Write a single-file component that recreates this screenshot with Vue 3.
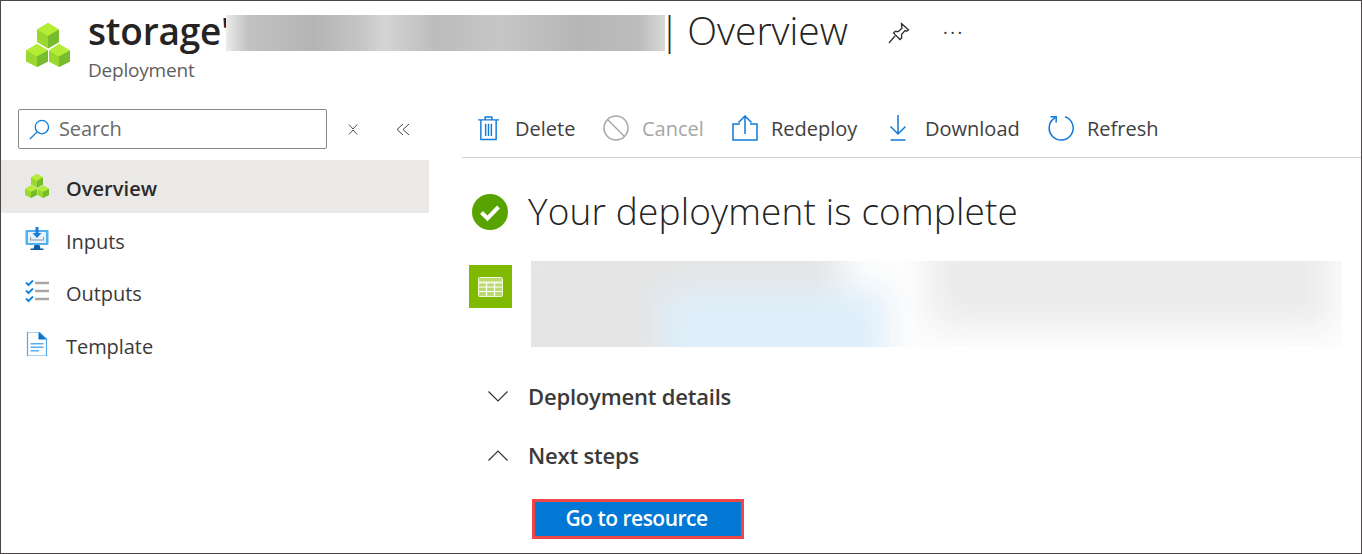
<script setup>
const navItems = [
  { label: 'Overview', icon: 'cubes', active: true },
  { label: 'Inputs', icon: 'inputs' },
  { label: 'Outputs', icon: 'outputs' },
  { label: 'Template', icon: 'template' },
];
</script>

<template>
  <div class="frame">
    <header class="page-header">
      <svg class="logo" viewBox="0 0 44 44">
        <path d="M22 0l11 6.500v12.500L22 25.500 11 19V6.500z" fill="#9ad82f" />
        <path d="M22 0l11 6.500L22 13 11 6.500z" fill="#b4ec36" />
        <path d="M22 13l11-6.500V19l-11 6.500z" fill="#76bc2d" />
        <path d="M11 21l11 6.500v11L11 44 0 38.500v-11z" fill="#9ad82f" />
        <path d="M11 21l11 6.500L11 33.500 0 27.500z" fill="#b4ec36" />
        <path d="M11 33.500l11-6v11L11 44z" fill="#76bc2d" />
        <path d="M33 21l11 6.500v11L33 44l-10-5.500v-11z" fill="#9ad82f" />
        <path d="M33 21l11 6.500-11 6-10-6z" fill="#b4ec36" />
        <path d="M33 33.500l11-6v11L33 44z" fill="#76bc2d" />
      </svg>
      <div class="heading">
        <div class="title-row">
          <span class="title-name">storage'</span>
          <span class="title-blur"><i></i></span>
          <span class="title-page">| Overview</span>
          <svg class="pin" viewBox="0 0 24 24" fill="none" stroke="#333" stroke-width="1.300">
            <path d="M14.500 2.500l7 6.500-2 1.200-1.500-.6-3.500 4 .2 3.400-1.700 1.500-6.500-6.500 1.500-1.700 3.400.2 3.700-3.500-.5-1.700z" />
            <path d="M8 15l-6 7" />
          </svg>
          <span class="more">···</span>
        </div>
        <div class="subtitle">Deployment</div>
      </div>
    </header>

    <div class="content">
      <aside class="sidebar">
        <div class="search-row">
          <div class="search">
            <svg viewBox="0 0 22 22" fill="none" stroke="#0f7fdc" stroke-width="1.400">
              <circle cx="13.500" cy="8.500" r="7" />
              <path d="M8.500 13.500L1 21" />
            </svg>
            <span>Search</span>
          </div>
          <svg class="collapse-icon" viewBox="0 0 12 12" fill="none" stroke="#444" stroke-width="1">
            <path d="M1 .5l4.500 5 4.500-5M1 11.500l4.500-5 4.500 5" />
          </svg>
          <svg class="collapse-icon second" viewBox="0 0 14 12" fill="none" stroke="#444" stroke-width="1">
            <path d="M7 .5L1 6l6 5.500M13 .5L7 6l6 5.500" />
          </svg>
        </div>
        <nav class="nav">
          <div v-for="item in navItems" :key="item.label" class="nav-item" :class="{ active: item.active }">
            <svg v-if="item.icon === 'cubes'" class="nav-icon" viewBox="0 0 24 24">
              <path d="M12 0l6 3.500v7L12 14l-6-3.500v-7z" fill="#9ad82f" />
              <path d="M12 0l6 3.500L12 7 6 3.500z" fill="#b4ec36" />
              <path d="M12 7l6-3.500v7L12 14z" fill="#76bc2d" />
              <path d="M6 11.500l6 3.500v6l-6 3-6-3v-6z" fill="#9ad82f" />
              <path d="M6 11.500l6 3.500-6 3-6-3z" fill="#b4ec36" />
              <path d="M6 18l6-3v6l-6 3z" fill="#76bc2d" />
              <path d="M18 11.500l6 3.500v6l-6 3-5.500-3v-6z" fill="#9ad82f" />
              <path d="M18 11.500l6 3.500-6 3-5.500-3z" fill="#b4ec36" />
              <path d="M18 18l6-3v6l-6 3z" fill="#76bc2d" />
            </svg>
            <svg v-else-if="item.icon === 'inputs'" class="nav-icon" viewBox="0 0 24 24">
              <rect x="0.500" y="3" width="23" height="15" rx="1" fill="#50b0f0" />
              <rect x="3" y="5" width="18" height="11" fill="#e4f3fc" />
              <path d="M9.500 18h5l1 3.500h3V23h-13v-1.500h3z" fill="#0f5fa8" />
              <path d="M10.500 0h3v6h3L12 11 7.500 6h3z" fill="#1a7fd4" />
              <path d="M5 10v3.500h14V10h-1v2.500H6V10z" fill="#8a9aa6" />
            </svg>
            <svg v-else-if="item.icon === 'outputs'" class="nav-icon" viewBox="0 0 24 24" fill="none">
              <path d="M1 3.500l2.500 2.500L8 1.500M1 11.500l2.500 2.500L8 9.500M1 19.500l2.500 2.500L8 17.500" stroke="#1a86e0" stroke-width="2" />
              <path d="M10 4h14M10 12h14M10 20h14" stroke="#a6a6a6" stroke-width="2.600" />
            </svg>
            <svg v-else class="nav-icon" viewBox="0 0 24 24">
              <path d="M2.500 0H14l7.500 7v17h-19z" fill="#fff" stroke="#50a8ee" stroke-width="1.200" />
              <path d="M13.500 0l8 7.500h-8z" fill="#0f72c8" />
              <path d="M5.500 11h13v1.500h-13zM5.500 14.500h13V16h-13zM5.500 18h8.500v1.500H5.500z" fill="#5aaef0" />
            </svg>
            <span>{{ item.label }}</span>
          </div>
        </nav>
      </aside>

      <main class="main">
        <div class="toolbar">
          <div class="tool tool-delete">
            <svg viewBox="0 0 22 26" fill="none" stroke="#0f7ad8" stroke-width="1.500">
              <path d="M0 4.500h22M7.500 4.500V1.500h7v3M3 4.500V25h16V4.500M8 8.500v13M11 8.500v13M14 8.500v13" />
            </svg>
            <span>Delete</span>
          </div>
          <div class="tool tool-cancel disabled">
            <svg viewBox="0 0 26 26" fill="none" stroke="#a6a6a6" stroke-width="1.500">
              <circle cx="13" cy="13" r="12" />
              <path d="M4.500 4.500l17 17" />
            </svg>
            <span>Cancel</span>
          </div>
          <div class="tool tool-redeploy">
            <svg viewBox="0 0 26 26" fill="none" stroke="#0f7ad8" stroke-width="1.500">
              <path d="M8 9H1v16h24V9h-7M13 19V1.500M6.500 7.500L13 1l6.500 6.500" />
            </svg>
            <span>Redeploy</span>
          </div>
          <div class="tool tool-download">
            <svg viewBox="0 0 18 26" fill="none" stroke="#0f7ad8" stroke-width="1.500">
              <path d="M9 0v18.500M1.500 11.500L9 19l7.500-7.500M1.500 25h15" />
            </svg>
            <span>Download</span>
          </div>
          <div class="tool tool-refresh">
            <svg viewBox="0 0 26 26" fill="none" stroke="#0f7ad8" stroke-width="1.500">
              <path d="M7.500 2.500A12 12 0 1 0 17 1.700" />
              <path d="M2.500 1.800h5.700v5.700" />
            </svg>
            <span>Refresh</span>
          </div>
        </div>

        <div class="status">
          <svg viewBox="0 0 36 36">
            <circle cx="18" cy="18" r="18" fill="#57a300" />
            <path d="M9.500 18.500l6 6L26.500 13" fill="none" stroke="#fff" stroke-width="4" />
          </svg>
          <h1>Your deployment is complete</h1>
        </div>

        <div class="resource">
          <div class="resource-icon">
            <svg viewBox="0 0 25 20">
              <rect x="0.500" y="0.500" width="24" height="19" rx="1" fill="#bbdb6e" stroke="#f2f8dc" />
              <path d="M1 5.500h23" stroke="#f2f8dc" stroke-width="2" />
              <path d="M1 10h23M1 14.500h23M8.500 5.500V19M16.500 5.500V19" stroke="#fff" stroke-width="1.200" />
            </svg>
          </div>
          <div class="resource-blur"><i></i><b></b><em></em></div>
        </div>

        <div class="section">
          <svg viewBox="0 0 20 11" fill="none" stroke="#333" stroke-width="1.200"><path d="M.5.500L10 10 19.500.5" /></svg>
          <span>Deployment details</span>
        </div>
        <div class="section next">
          <svg viewBox="0 0 20 11" fill="none" stroke="#333" stroke-width="1.200"><path d="M.5 10.500L10 1l9.500 9.500" /></svg>
          <span>Next steps</span>
        </div>
        <button class="go-button"><span>Go to resource</span></button>
      </main>
    </div>
  </div>
</template>

<style>
html, body {
  margin: 0;
  background: #fff;
}
</style>

<style scoped>
.frame {
  width: 1362px;
  height: 554px;
  box-sizing: border-box;
  border: 1px solid #4b4648;
  overflow: hidden;
  background: #fff;
  color: #323130;
  font-family: "Open Sans", "Noto Sans", sans-serif;
}

.page-header {
  display: flex;
  height: 99px;
  padding: 22px 0 0 25px;
  box-sizing: border-box;
}

.logo {
  width: 44px;
  height: 44px;
  flex: none;
}

.heading {
  margin-left: 18px;
  margin-top: -13px;
}

.title-row {
  display: flex;
  align-items: center;
  height: 46px;
  font-size: 37px;
  color: #252423;
}

.title-name {
  width: 138px;
  flex: none;
  font-weight: 600;
  letter-spacing: -0.2px;
  white-space: nowrap;
  padding-bottom: 6px;
}

.title-blur {
  width: 439px;
  height: 36px;
  flex: none;
  overflow: hidden;
  position: relative;
  background: #c4c4c4;
}

.title-blur i {
  position: absolute;
  inset: 0;
  background: linear-gradient(90deg, #ebebeb 0, #c2c2c2 5%, #b4b4b4 20%, #c4c4c4 30%, #d4d4d4 36%, #bcbcbc 48%, #c6c6c6 62%, #b6b6b6 80%, #bcbcbc 94%, #d8d8d8 100%);
}

.title-page {
  width: 202px;
  margin-left: -6px;
  flex: none;
  font-size: 39px;
  font-weight: 300;
  word-spacing: -3px;
  box-sizing: border-box;
  white-space: nowrap;
  padding-bottom: 7px;
}

.pin {
  width: 24px;
  height: 24px;
  margin-left: 26px;
  flex: none;
}

.more {
  margin-left: 32px;
  font-size: 18px;
  letter-spacing: 2.500px;
  color: #333;
  padding-bottom: 2px;
}

.subtitle {
  font-size: 19px;
  color: #605e5c;
  margin-top: 1px;
  letter-spacing: -0.2px;
}

.content {
  display: grid;
  grid-template-columns: 428px 1fr;
  column-gap: 33px;
}

.search-row {
  display: flex;
  align-items: center;
  padding: 9px 0 0 17px;
}

.search {
  width: 309px;
  height: 40px;
  box-sizing: border-box;
  display: flex;
  align-items: center;
  gap: 9px;
  padding-left: 10px;
  border: 1px solid #8a8886;
  border-radius: 2px;
  font-size: 20px;
  color: #6b6a68;
  letter-spacing: -0.1px;
}

.search span {
  padding-bottom: 2px;
}

.search svg {
  width: 21px;
  height: 21px;
}

.collapse-icon {
  width: 11px;
  height: 13px;
  margin-left: 21px;
}

.collapse-icon.second {
  width: 14px;
  margin-left: 37px;
}

.nav {
  margin-top: 11px;
}

.nav-item {
  display: flex;
  align-items: center;
  height: 52.500px;
  padding-left: 24px;
  font-size: 20px;
  color: #3b3a39;
  letter-spacing: -0.05px;
}

.nav-item span {
  padding-top: 5px;
}

.nav-item.active {
  background: #ebe9e7;
  font-weight: 600;
  color: #2b2a29;
  letter-spacing: 0.050px;
}

.nav-icon {
  width: 24px;
  height: 24px;
  margin-right: 17px;
  flex: none;
}

.toolbar {
  display: flex;
  height: 58px;
  box-sizing: border-box;
  align-items: center;
  border-bottom: 1px solid #d2d0ce;
  padding-left: 16px;
  font-size: 20px;
  color: #414040;
  letter-spacing: 0;
}

.tool {
  display: flex;
  align-items: center;
  white-space: nowrap;
}

.tool svg {
  height: 26px;
  flex: none;
  margin-top: -1px;
}

.disabled {
  color: #a6a6a6;
}

.tool-delete { width: 125px; }
.tool-delete svg { width: 21px; margin-right: 16px; }
.tool-cancel { width: 129px; }
.tool-cancel svg { width: 26px; margin-right: 13px; }
.tool-redeploy { width: 157px; }
.tool-redeploy svg { width: 26px; margin-right: 13px; }
.tool-download { width: 159px; }
.tool-download svg { width: 18px; margin-right: 18px; }
.tool-refresh svg { width: 26px; margin-right: 13px; }

.status {
  display: flex;
  align-items: center;
  height: 56px;
  margin-top: 26px;
  padding-left: 10px;
}

.status svg {
  width: 36px;
  height: 36px;
  flex: none;
}

.status h1 {
  margin: -3px 0 0 20px;
  font-size: 37px;
  font-weight: 300;
  color: #252423;
  letter-spacing: 0.150px;
  white-space: nowrap;
}

.resource {
  display: flex;
  margin-top: 21px;
  padding-left: 7px;
}

.resource-icon {
  width: 43px;
  height: 43px;
  margin-top: 4px;
  background: #7fba00;
  display: flex;
  align-items: center;
  justify-content: center;
  flex: none;
}

.resource-icon svg {
  width: 25px;
  height: 20px;
}

.resource-blur {
  width: 811px;
  height: 86px;
  margin-left: 19px;
  position: relative;
  overflow: hidden;
  background: #fdfdfd;
}

.resource-blur i,
.resource-blur b,
.resource-blur em {
  position: absolute;
  display: block;
  filter: blur(16px);
}

.resource-blur i {
  left: -30px;
  top: -30px;
  width: 340px;
  height: 150px;
  background: #e5e5e5;
}

.resource-blur b {
  left: 130px;
  top: 28px;
  width: 225px;
  height: 90px;
  background: #deeefa;
}

.resource-blur em {
  left: 400px;
  top: -40px;
  width: 400px;
  height: 105px;
  background: #ebebeb;
}

.section {
  display: flex;
  align-items: center;
  height: 28px;
  margin-left: 26px;
  font-size: 22px;
  font-weight: 600;
  color: #3b3a39;
  letter-spacing: -0.2px;
}

.resource + .section {
  margin-top: 35px;
}

.section.next {
  margin-top: 31px;
}

.section svg {
  width: 20px;
  height: 11px;
  margin-right: 20px;
  flex: none;
}

.go-button {
  display: block;
  width: 212px;
  height: 40px;
  margin: 30px 0 0 70px;
  box-sizing: border-box;
  border: 3px solid #f04848;
  background: #0078d4;
  color: #fff;
  font-family: inherit;
  font-size: 21px;
  font-weight: 600;
  letter-spacing: -0.5px;
  padding: 0 3px 2px 0;
}
</style>
